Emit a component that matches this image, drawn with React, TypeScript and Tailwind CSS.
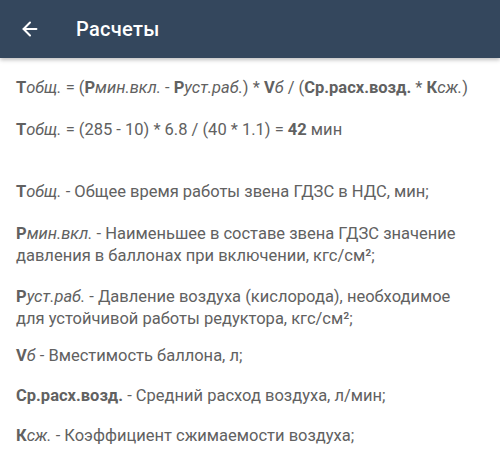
import { ArrowLeft } from "lucide-react"

const Term = ({ main, sub }: { main: string; sub: string }) => (
  <>
    <b className="font-bold">{main}</b>
    <i>{sub}</i>
  </>
)

export default function App() {
  return (
    <div className="w-[500px] h-[469px] overflow-hidden bg-white font-['Roboto',sans-serif]">
      <div className="h-[58px] bg-[#34475d] flex items-center shadow-[0_2px_4px_rgba(0,0,0,0.25)] relative">
        <ArrowLeft className="ml-[19px] text-white" size={22} strokeWidth={2.2} />
        <h1 className="ml-[35px] text-white text-[20px] font-medium tracking-[0.3px]">Расчеты</h1>
      </div>

      <div className="pl-[16px] pr-[22px] pt-[19px] text-[16.5px] leading-[22px] text-[#616161]">
        <p>
          <Term main="Т" sub="общ." /> = (<Term main="Р" sub="мин.вкл." /> -{" "}
          <Term main="Р" sub="уст.раб." />) * <Term main="V" sub="б" /> / (
          <b>Ср.расх.возд.</b> * <Term main="К" sub="сж." />)
        </p>
        <p className="mt-[20px]">
          <Term main="Т" sub="общ." /> = (285 - 10) * 6.8 / (40 * 1.1) = <b>42</b> мин
        </p>

        <p className="mt-[40px]">
          <Term main="Т" sub="общ." /> - Общее время работы звена ГДЗС в НДС, мин;
        </p>
        <p className="mt-[20px]">
          <Term main="Р" sub="мин.вкл." /> - Наименьшее в составе звена ГДЗС значение давления в баллонах при включении, кгс/см²;
        </p>
        <p className="mt-[19px]">
          <Term main="Р" sub="уст.раб." /> - Давление воздуха (кислорода), необходимое для устойчивой работы редуктора, кгс/см²;
        </p>
        <p className="mt-[15px]">
          <Term main="V" sub="б" /> - Вместимость баллона, л;
        </p>
        <p className="mt-[18px]">
          <b>Ср.расх.возд.</b> - Средний расход воздуха, л/мин;
        </p>
        <p className="mt-[18px]">
          <Term main="К" sub="сж." /> - Коэффициент сжимаемости воздуха;
        </p>
      </div>
    </div>
  )
}
